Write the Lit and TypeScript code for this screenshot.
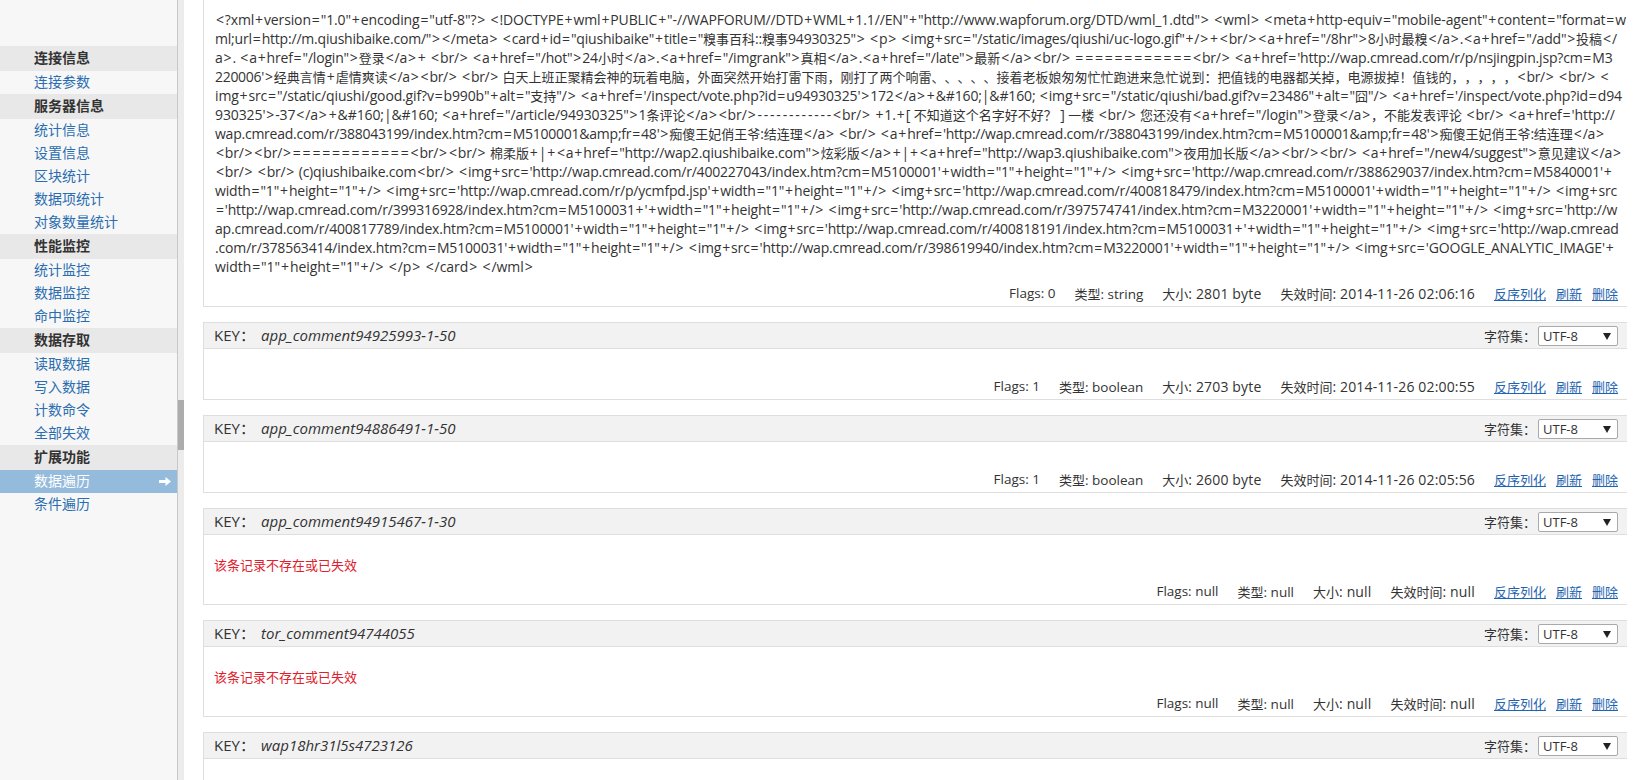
import { LitElement, html, css } from "lit";
import { customElement } from "lit/decorators.js";
import { styleMap } from "lit/directives/style-map.js";

const LINES: [string, number][] = [
  [`<?xml+version="1.0"+encoding="utf-8"?> <!DOCTYPE+wml+PUBLIC+"-//WAPFORUM//DTD+WML+1.1//EN"+"http://www.wapforum.org/DTD/wml_1.dtd"> <wml> <meta+http-equiv="mobile-agent"+content="format=w`, -0.13],
  [`ml;url=http://m.qiushibaike.com/"></meta> <card+id="qiushibaike"+title="糗事百科::糗事94930325"> <p> <img+src="/static/images/qiushi/uc-logo.gif"+/>+<br/><a+href="/8hr">8小时最糗</a>.<a+href="/add">投稿</`, -0.2],
  [`a>. <a+href="/login">登录</a>+ <br/> <a+href="/hot">24小时</a>.<a+href="/imgrank">真相</a>.<a+href="/late">最新</a><br/> ============<br/> <a+href='http://wap.cmread.com/r/p/nsjingpin.jsp?cm=M3`, -0.19],
  [`220006'>经典言情+虐情爽读</a><br/> <br/> 白天上班正聚精会神的玩着电脑，外面突然开始打雷下雨，刚打了两个响雷、、、、、接着老板娘匆匆忙忙跑进来急忙说到：把值钱的电器都关掉，电源拔掉！值钱的，，，，，<br/> <br/> <`, -0.3],
  [`img+src="/static/qiushi/good.gif?v=b990b"+alt="支持"/> <a+href='/inspect/vote.php?id=u94930325'>172</a>+&#160;|&#160; <img+src="/static/qiushi/bad.gif?v=23486"+alt="囧"/> <a+href='/inspect/vote.php?id=d94`, -0.15],
  [`930325'>-37</a>+&#160;|&#160; <a+href="/article/94930325">1条评论</a><br/>------------<br/> +1.+[ 不知道这个名字好不好？ ] 一楼 <br/> 您还没有<a+href="/login">登录</a>，不能发表评论 <br/> <a+href='http://`, -0.1],
  [`wap.cmread.com/r/388043199/index.htm?cm=M5100001&amp;fr=48'>痴傻王妃俏王爷:结连理</a> <br/> <a+href='http://wap.cmread.com/r/388043199/index.htm?cm=M5100001&amp;fr=48'>痴傻王妃俏王爷:结连理</a>`, -0.24],
  [`<br/><br/>============<br/><br/> 棉柔版+|+<a+href="http://wap2.qiushibaike.com">炫彩版</a>+|+<a+href="http://wap3.qiushibaike.com">夜用加长版</a><br/><br/> <a+href="/new4/suggest">意见建议</a>`, -0.2],
  [`<br/> <br/> (c)qiushibaike.com<br/> <img+src='http://wap.cmread.com/r/400227043/index.htm?cm=M5100001'+width="1"+height="1"+/> <img+src='http://wap.cmread.com/r/388629037/index.htm?cm=M5840001'+`, -0.21],
  [`width="1"+height="1"+/> <img+src='http://wap.cmread.com/r/p/ycmfpd.jsp'+width="1"+height="1"+/> <img+src='http://wap.cmread.com/r/400818479/index.htm?cm=M5100001'+width="1"+height="1"+/> <img+src`, -0.18],
  [`='http://wap.cmread.com/r/399316928/index.htm?cm=M5100031+'+width="1"+height="1"+/> <img+src='http://wap.cmread.com/r/397574741/index.htm?cm=M3220001'+width="1"+height="1"+/> <img+src='http://w`, -0.18],
  [`ap.cmread.com/r/400817789/index.htm?cm=M5100001'+width="1"+height="1"+/> <img+src='http://wap.cmread.com/r/400818191/index.htm?cm=M5100031+'+width="1"+height="1"+/> <img+src='http://wap.cmread`, -0.2],
  [`.com/r/378563414/index.htm?cm=M5100031'+width="1"+height="1"+/> <img+src='http://wap.cmread.com/r/398619940/index.htm?cm=M3220001'+width="1"+height="1"+/> <img+src='GOOGLE_ANALYTIC_IMAGE'+`, -0.16],
  [`width="1"+height="1"+/> </p> </card> </wml>`, -0.05],
];

const NAV: { title: string; items: string[] }[] = [
  { title: "连接信息", items: ["连接参数"] },
  { title: "服务器信息", items: ["统计信息", "设置信息", "区块统计", "数据项统计", "对象数量统计"] },
  { title: "性能监控", items: ["统计监控", "数据监控", "命中监控"] },
  { title: "数据存取", items: ["读取数据", "写入数据", "计数命令", "全部失效"] },
  { title: "扩展功能", items: ["数据遍历", "条件遍历"] },
];

interface Rec {
  key: string;
  flags: string;
  type: string;
  size: string;
  exp: string;
  missing?: boolean;
}

const RECS: Rec[] = [
  { key: "app_comment94925993-1-50", flags: "1", type: "boolean", size: "2703 byte", exp: "2014-11-26 02:00:55" },
  { key: "app_comment94886491-1-50", flags: "1", type: "boolean", size: "2600 byte", exp: "2014-11-26 02:05:56" },
  { key: "app_comment94915467-1-30", flags: "null", type: "null", size: "null", exp: "null", missing: true },
  { key: "tor_comment94744055", flags: "null", type: "null", size: "null", exp: "null", missing: true },
];

const SPLIT = /([\u2E80-\u9FFF\uFF00-\uFFEF\u3000-\u303F]+|[=+<>]+|-{2,})/;

function mixed(text: string) {
  return text.split(SPLIT).map((part, i) =>
    i % 2 ? html`<span class=${/[=+<>-]/.test(part[0]) ? "w" : "z"}>${part}</span>` : part
  );
}

@customElement("app-root")
export class AppRoot extends LitElement {
  static styles = css`
    :host {
      display: grid;
      grid-template-columns: 177px 7px 1fr;
      height: 780px;
      overflow: hidden;
      background: #fff;
      color: #333;
      font-family: "Open Sans", "Noto Sans CJK SC", sans-serif;
      font-size: 14px;
      text-spacing-trim: space-all;
    }
    a { color: #1f64b0; font-size: 13px; font-family: "Noto Sans CJK SC", sans-serif; }
    .z { font-family: "Noto Sans CJK SC", sans-serif; font-size: 13px; letter-spacing: 0; }
    .w { letter-spacing: 1.8px; padding-left: 0.9px; margin-right: -0.9px; }
    .side { background: #f7f7f7; padding-top: 46px; font-family: "Noto Sans CJK SC", sans-serif; font-size: 14px; }
    .head {
      height: 25px;
      line-height: 23px;
      background: #e8e8e8;
      padding-left: 34px;
      font-weight: 700;
      color: #333;
    }
    .item {
      display: flex;
      align-items: center;
      justify-content: space-between;
      height: 23px;
      box-sizing: border-box;
      padding: 0 6px 4px 34px;
      color: #2a6db0;
    }
    .item.on { background: #94bbdb; color: #fff; }
    .item svg { margin-top: 4px; }
    .track {
      background: #ececec;
      border-left: 1px solid #c8c8c8;
      padding-top: 400px;
    }
    .thumb { height: 50px; background: #acacac; }
    .main { padding: 0 17px 0 19px; min-width: 0; }
    .card { border-left: 1px solid #dedede; border-bottom: 1px solid #dedede; margin-bottom: 15px; }
    .card.first { padding-top: 10px; }
    .card.first .foot { margin-top: 6px; }
    .rows { padding-left: 11px; line-height: 19px; color: #333; }
    .row { white-space: pre; height: 19px; }
    .hdr {
      display: flex;
      align-items: center;
      height: 25px;
      background: #f2f2f2;
      border-top: 1px solid #dedede;
      border-bottom: 1px solid #dedede;
      padding: 0 9px 0 10px;
    }
    .lbl { width: 47px; font-size: 15px; padding-bottom: 2px; }
    .key { font-style: italic; font-size: 15px; color: #333; flex: 1; padding-bottom: 2px; }
    .cs { margin-right: 2px; font-size: 13px; font-family: "Noto Sans CJK SC", sans-serif; }
    .sel { position: relative; width: 80px; height: 20px; }
    select {
      appearance: none;
      width: 80px;
      height: 20px;
      border: 1px solid #a9a9a9;
      border-radius: 2px;
      background: #fff;
      font: 13px "Open Sans", sans-serif;
      color: #333;
      padding: 0 0 0 4px;
      display: block;
    }
    .arrow { position: absolute; right: 7px; top: 7px; width: 8px; height: 7px; }
    .body { height: 26px; }
    .err { height: 45px; color: #e0202c; padding-left: 10px; line-height: 20px; padding-top: 20px; box-sizing: border-box; font-family: "Noto Sans CJK SC", sans-serif; font-size: 13px; }
    .foot {
      display: flex;
      justify-content: flex-end;
      align-items: center;
      gap: 19px;
      height: 24px;
      box-sizing: border-box;
      padding: 0 9px 2px 0;
      white-space: nowrap;
      letter-spacing: 0.15px;
    }
    .foot .sm { font-size: 13.5px; letter-spacing: 0; }
    .foot .links { display: flex; gap: 10px; letter-spacing: 0; }
  `;

  private foot(f: string, t: string, s: string, e: string) {
    return html`<div class="foot">
      <span class="sm">Flags: ${f}</span><span class="sm">${mixed("类型")}: ${t}</span><span>${mixed("大小")}: ${s}</span><span>${mixed("失效时间")}: ${e}</span>
      <span class="links"><a href="#">反序列化</a><a href="#">刷新</a><a href="#">删除</a></span>
    </div>`;
  }

  private header(key: string) {
    return html`<div class="hdr">
      <span class="lbl">KEY：</span><span class="key">${key}</span>
      <span class="cs">字符集：</span>
      <span class="sel">
        <select><option>UTF-8</option></select>
        <svg class="arrow" viewBox="0 0 8 7"><path d="M0 0h8L4 7z" fill="#222"></path></svg>
      </span>
    </div>`;
  }

  render() {
    return html`
      <nav class="side">
        ${NAV.map(
          (g) => html`<div class="head">${g.title}</div>
            ${g.items.map(
              (i) => html`<div class="item ${i === "数据遍历" ? "on" : ""}">
                <span>${i}</span>
                ${i === "数据遍历"
                  ? html`<svg width="12" height="9" viewBox="0 0 12 9"><path d="M0 3h6.500V0L12 4.500 6.500 9V6H0z" fill="#fff"></path></svg>`
                  : ""}
              </div>`
            )}`
        )}
      </nav>
      <div class="track"><div class="thumb"></div></div>
      <main class="main">
        <section class="card first">
          <div class="rows">
            ${LINES.map(
              ([l, s]) => html`<div class="row" style=${styleMap({ letterSpacing: `${s}px` })}>${mixed(l)}</div>`
            )}
          </div>
          ${this.foot("0", "string", "2801 byte", "2014-11-26 02:06:16")}
        </section>
        ${RECS.map(
          (r) => html`<section class="card">
            ${this.header(r.key)}
            ${r.missing ? html`<div class="err">该条记录不存在或已失效</div>` : html`<div class="body"></div>`}
            ${this.foot(r.flags, r.type, r.size, r.exp)}
          </section>`
        )}
        <section class="card">${this.header("wap18hr31l5s4723126")}<div class="body"></div></section>
      </main>
    `;
  }
}
